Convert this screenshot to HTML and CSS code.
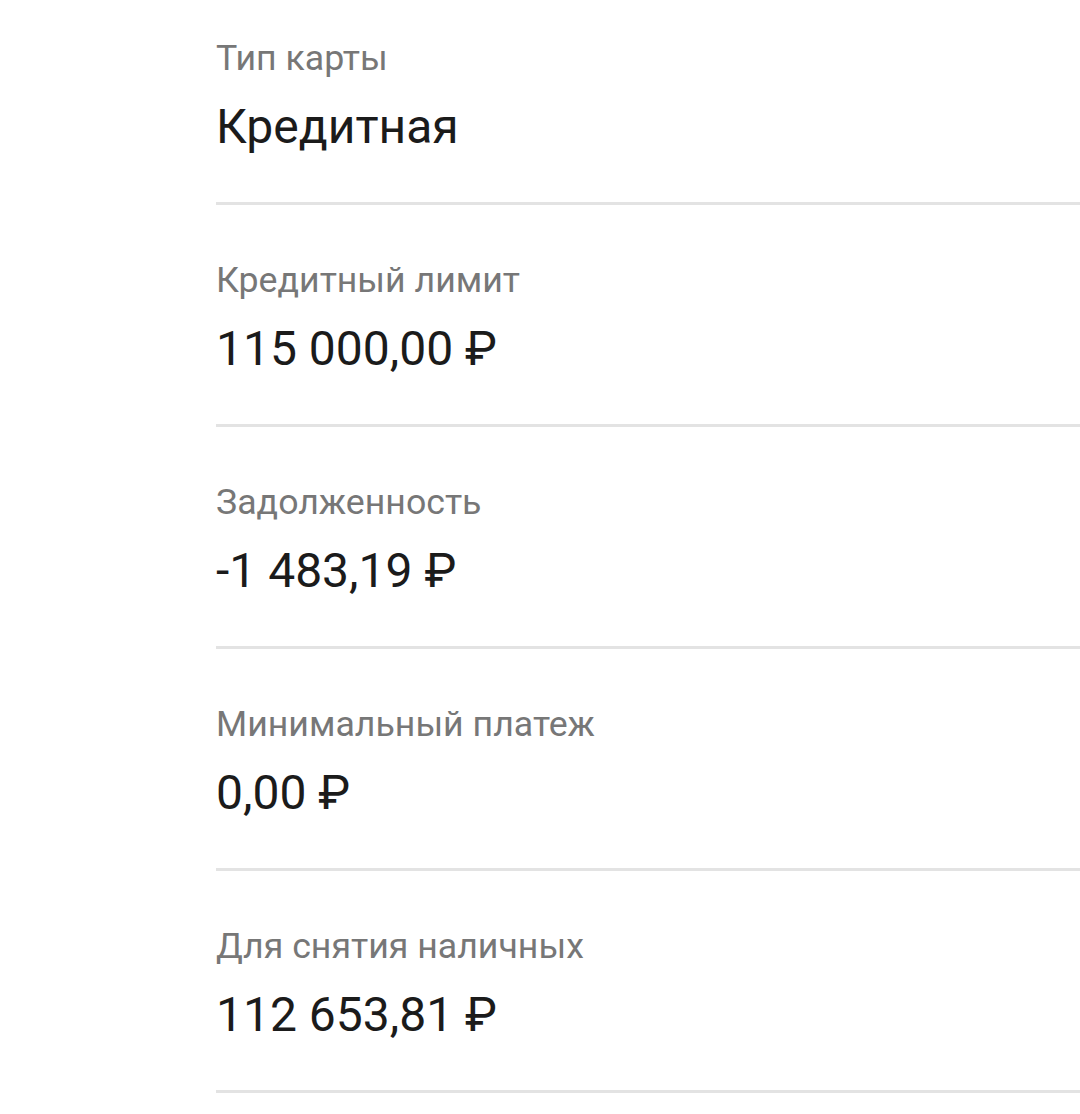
FILE: index.html
```html
<!DOCTYPE html>
<html lang="ru">
<head>
<meta charset="utf-8">
<link rel="stylesheet" href="styles.css">
</head>
<body>
<div class="list">
  <div class="item">
    <div class="label">Тип карты</div>
    <div class="value">Кредитная</div>
  </div>
  <div class="item">
    <div class="label">Кредитный лимит</div>
    <div class="value">115 000,00 ₽</div>
  </div>
  <div class="item">
    <div class="label">Задолженность</div>
    <div class="value">-1 483,19 ₽</div>
  </div>
  <div class="item">
    <div class="label">Минимальный платеж</div>
    <div class="value">0,00 ₽</div>
  </div>
  <div class="item">
    <div class="label">Для снятия наличных</div>
    <div class="value">112 653,81 ₽</div>
  </div>
</div>
</body>
</html>
```
FILE: styles.css
```css
html, body {
  margin: 0;
  padding: 0;
  background: #ffffff;
  overflow: hidden;
}
body {
  font-family: Roboto, "Noto Sans", sans-serif;
}
.list {
  margin-top: -17px;
  margin-left: 216px;
}
.item {
  padding: 51px 0 45px 0;
  border-bottom: 3px solid #e3e3e3;
}
.label {
  font-size: 35.7px;
  line-height: 48px;
  color: #777777;
}
.value {
  margin-top: 14px;
  font-size: 48px;
  line-height: 61px;
  color: #1b1b1b;
}
```
